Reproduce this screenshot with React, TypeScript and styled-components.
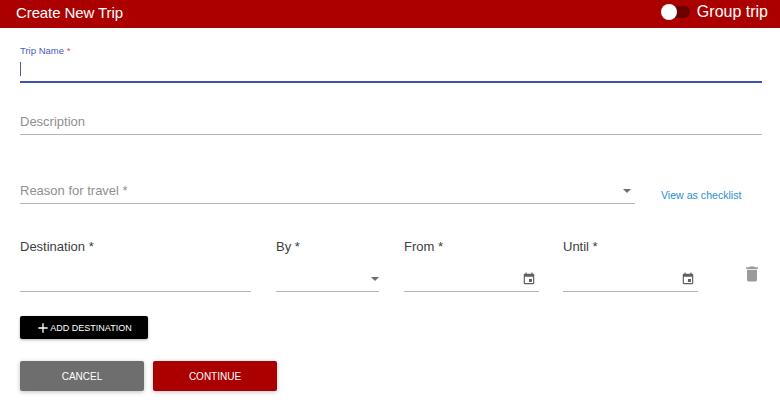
import React from 'react'
import styled, { createGlobalStyle } from 'styled-components'

const GlobalStyle = createGlobalStyle`
    html, body {
        margin: 0;
        padding: 0;
        background: white;
        font-family: "Liberation Sans", Arial, sans-serif;
    }
`

const Page = styled.div`
    display: flex;
    flex-direction: column;
    width: 780px;
    height: 403px;
    overflow: hidden;
`

const Header = styled.div`
    display: flex;
    height: 28px;
    box-sizing: border-box;
    padding: 0 12px 4px 16px;
    background-color: #ab0000;
    justify-content: space-between;
    align-items: center;
    color: white;
`

const Title = styled.div`
    font-size: 15px;
    letter-spacing: -0.1px;
`

const GroupToggle = styled.div`
    display: flex;
    align-items: center;
    gap: 7px;
    font-size: 16px;
`

const SwitchTrack = styled.div`
    position: relative;
    width: 25px;
    height: 12px;
    border-radius: 6px;
    background-color: #6b0000;
`

const SwitchThumb = styled.div`
    position: absolute;
    left: -4px;
    top: -2px;
    width: 16px;
    height: 16px;
    border-radius: 50%;
    background-color: white;
`

const Form = styled.div`
    display: flex;
    flex-direction: column;
    padding: 0 18px 0 20px;
`

const Field = styled.div<{ $height: number; $grow?: boolean; $focused?: boolean }>`
    position: relative;
    display: flex;
    flex-direction: column;
    justify-content: flex-end;
    height: ${(p) => p.$height}px;
    flex: ${(p) => (p.$grow ? 1 : 'none')};
    border-bottom: ${(p) => (p.$focused ? '2px solid #3f51b5' : '1px solid #b5b5b5')};
    box-sizing: border-box;
`

const FloatLabel = styled.label`
    position: absolute;
    top: 17px;
    left: 0;
    font-size: 9.5px;
    color: #4a5cc0;

    span {
        color: #e8476a;
    }
`

const Caret = styled.div`
    width: 1px;
    height: 14px;
    margin-bottom: 5px;
    background-color: #5a5a90;
`

const Placeholder = styled.div`
    margin-bottom: 5px;
    font-size: 13px;
    color: #8f8f8f;
`

const ReasonRow = styled.div`
    display: flex;
    align-items: flex-end;
`

const ChecklistLink = styled.a`
    width: 101px;
    padding-left: 26px;
    margin-bottom: 3px;
    font-size: 10.6px;
    color: #2b8fc9;
    text-decoration: none;
    white-space: nowrap;
`

const Arrow = styled.div<{ $right: number }>`
    position: absolute;
    right: ${(p) => p.$right}px;
    bottom: 10px;
    width: 0;
    height: 0;
    border-left: 4px solid transparent;
    border-right: 4px solid transparent;
    border-top: 4px solid #6e6e6e;
`

const DestinationRow = styled.div`
    display: flex;
`

const Column = styled.div<{ $width: number; $gap: number }>`
    display: flex;
    flex-direction: column;
    width: ${(p) => p.$width}px;
    margin-right: ${(p) => p.$gap}px;
`

const ColumnLabel = styled.div`
    height: 25px;
    margin-top: 35px;
    font-size: 13px;
    color: #404040;
`

const DateIcon = styled.svg`
    position: absolute;
    right: 3px;
    bottom: 5px;
    width: 14px;
    height: 14px;
    fill: #5f5f5f;
`

const TrashIcon = styled.svg`
    flex: none;
    width: 20px;
    height: 20px;
    margin: 60px 0 0 -6px;
    fill: #9a9a9a;
`

const AddButton = styled.button`
    display: flex;
    align-items: center;
    justify-content: center;
    width: 128px;
    height: 23px;
    margin-top: 24px;
    padding: 0;
    border: none;
    border-radius: 2px;
    background-color: black;
    color: white;
    font-family: inherit;
    font-size: 9px;
    box-shadow: 0 1px 3px rgba(0, 0, 0, 0.3);

    svg {
        width: 16px;
        height: 16px;
        margin-right: -1px;
        margin-left: -1px;
        fill: white;
    }
`

const Actions = styled.div`
    display: flex;
    gap: 9px;
    margin-top: 22px;
`

const ActionButton = styled.button<{ $bg: string }>`
    width: 124px;
    height: 30px;
    padding: 0;
    border: none;
    border-radius: 2px;
    background-color: ${(p) => p.$bg};
    color: white;
    font-family: inherit;
    font-size: 10px;
    box-shadow: 0 1px 4px rgba(0, 0, 0, 0.25);
`

const eventPath =
    'M17 12h-5v5h5v-5zM16 1v2H8V1H6v2H5c-1.11 0-1.99.9-1.99 2L3 19c0 1.1.89 2 2 2h14c1.1 0 2-.9 2-2V5c0-1.1-.9-2-2-2h-1V1h-2zm3 18H5V8h14v11z'

function DateInput() {
    return (
        <DateIcon viewBox="0 0 24 24">
            <path d={eventPath} />
        </DateIcon>
    )
}

export default function App() {
    return (
        <Page>
            <GlobalStyle />
            <Header>
                <Title>Create New Trip</Title>
                <GroupToggle>
                    <SwitchTrack>
                        <SwitchThumb />
                    </SwitchTrack>
                    Group trip
                </GroupToggle>
            </Header>

            <Form>
                <Field $height={55} $focused>
                    <FloatLabel>
                        Trip Name <span>*</span>
                    </FloatLabel>
                    <Caret />
                </Field>

                <Field $height={52}>
                    <Placeholder>Description</Placeholder>
                </Field>

                <ReasonRow>
                    <Field $height={69} $grow>
                        <Placeholder>Reason for travel *</Placeholder>
                        <Arrow $right={4} />
                    </Field>
                    <ChecklistLink>View as checklist</ChecklistLink>
                </ReasonRow>

                <DestinationRow>
                    <Column $width={231} $gap={25}>
                        <ColumnLabel>Destination *</ColumnLabel>
                        <Field $height={28} />
                    </Column>
                    <Column $width={103} $gap={25}>
                        <ColumnLabel>By *</ColumnLabel>
                        <Field $height={28}>
                            <Arrow $right={0} />
                        </Field>
                    </Column>
                    <Column $width={135} $gap={24}>
                        <ColumnLabel>From *</ColumnLabel>
                        <Field $height={28}>
                            <DateInput />
                        </Field>
                    </Column>
                    <Column $width={135} $gap={50}>
                        <ColumnLabel>Until *</ColumnLabel>
                        <Field $height={28}>
                            <DateInput />
                        </Field>
                    </Column>
                    <TrashIcon viewBox="0 0 24 24">
                        <path d="M6 19c0 1.1.9 2 2 2h8c1.1 0 2-.9 2-2V7H6v12zM19 4h-3.5l-1-1h-5l-1 1H5v2h14V4z" />
                    </TrashIcon>
                </DestinationRow>

                <AddButton>
                    <svg viewBox="0 0 24 24">
                        <path d="M19 13h-6v6h-2v-6H5v-2h6V5h2v6h6v2z" />
                    </svg>
                    ADD DESTINATION
                </AddButton>

                <Actions>
                    <ActionButton $bg="#6e6e6e">CANCEL</ActionButton>
                    <ActionButton $bg="#ab0000">CONTINUE</ActionButton>
                </Actions>
            </Form>
        </Page>
    )
}
